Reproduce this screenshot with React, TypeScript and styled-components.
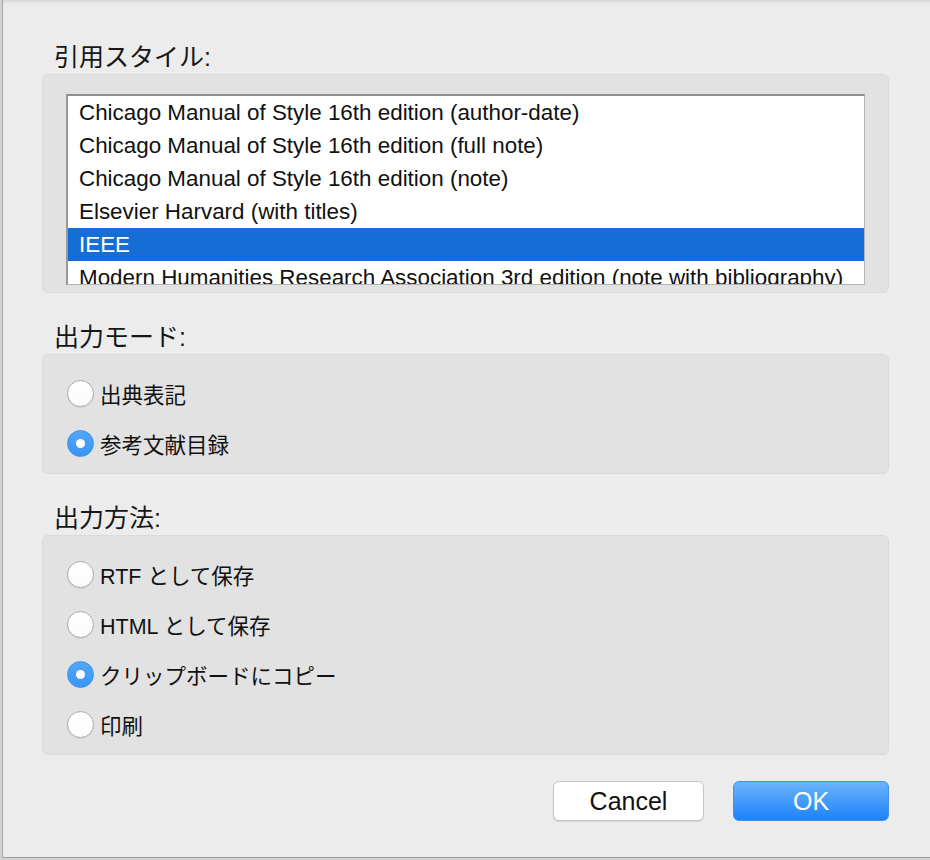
import React, { useState } from "react";
import styled, { createGlobalStyle } from "styled-components";

const GlobalStyle = createGlobalStyle`
  html, body {
    margin: 0;
    padding: 0;
    background: #d2d2d2;
  }
  body {
    font-family: "Liberation Sans", "Noto Sans CJK JP", sans-serif;
    color: #111;
  }
`;

const styles = [
  "Chicago Manual of Style 16th edition (author-date)",
  "Chicago Manual of Style 16th edition (full note)",
  "Chicago Manual of Style 16th edition (note)",
  "Elsevier Harvard (with titles)",
  "IEEE",
  "Modern Humanities Research Association 3rd edition (note with bibliography)",
];

const modes = ["出典表記", "参考文献目録"];
const outputs = ["RTF として保存", "HTML として保存", "クリップボードにコピー", "印刷"];

function App() {
  const [style, setStyle] = useState(4);
  const [mode, setMode] = useState(1);
  const [output, setOutput] = useState(2);

  return (
    <>
      <GlobalStyle />
      <Window>
        <Section>
          <Label>引用スタイル:</Label>
          <Group $list>
            <ListBox>
              {styles.map((name, index) => (
                <ListRow
                  key={name}
                  $selected={index === style}
                  onClick={() => setStyle(index)}
                >
                  {name}
                </ListRow>
              ))}
            </ListBox>
          </Group>
        </Section>

        <Section>
          <Label>出力モード:</Label>
          <Group>
            {modes.map((name, index) => (
              <RadioRow key={name} onClick={() => setMode(index)}>
                <Radio $checked={index === mode} />
                {name}
              </RadioRow>
            ))}
          </Group>
        </Section>

        <Section>
          <Label>出力方法:</Label>
          <Group>
            {outputs.map((name, index) => (
              <RadioRow key={name} onClick={() => setOutput(index)}>
                <Radio $checked={index === output} />
                {name}
              </RadioRow>
            ))}
          </Group>
        </Section>

        <Buttons>
          <Button>Cancel</Button>
          <Button $primary>OK</Button>
        </Buttons>
      </Window>
    </>
  );
}

const Window = styled.div`
  box-sizing: border-box;
  height: 858px;
  margin-left: 2px;
  padding: 40px 41px 0 39px;
  border-left: 1px solid #a9a9a9;
  border-bottom: 1px solid #9c9c9c;
  background: linear-gradient(#d5d5d5 0, #e6e6e6 3px, #ececec 6px, #ececec);
  display: flex;
  flex-direction: column;
  gap: 27px;
`;

const Section = styled.section`
  display: flex;
  flex-direction: column;
`;

const Label = styled.div`
  height: 34px;
  line-height: 34px;
  padding-left: 12px;
  font-size: 25px;
  color: #161616;
`;

const Group = styled.div<{ $list?: boolean }>`
  box-sizing: border-box;
  background: #e2e2e2;
  border: 1px solid #dadada;
  border-radius: 6px;
  padding: ${(p) => (p.$list ? "19px 23px 7px 23px" : "13px 0 5px 24px")};
`;

const ListBox = styled.div`
  box-sizing: border-box;
  height: 191px;
  overflow: hidden;
  background: #fff;
  border-top: 2px solid #8f8f8f;
  border-left: 2px solid #9a9a9a;
  border-right: 1px solid #b4b4b4;
  border-bottom: 1px solid #b4b4b4;
`;

const ListRow = styled.div<{ $selected?: boolean }>`
  height: 33px;
  line-height: 33px;
  padding-left: 11px;
  font-size: 22.4px;
  white-space: nowrap;
  color: ${(p) => (p.$selected ? "#fff" : "#111")};
  background: ${(p) => (p.$selected ? "#156ed6" : "transparent")};
  cursor: default;
`;

const RadioRow = styled.div`
  height: 50px;
  display: flex;
  align-items: center;
  gap: 6px;
  font-size: 21.5px;
  color: #111;
  cursor: default;
`;

const Radio = styled.span<{ $checked?: boolean }>`
  box-sizing: border-box;
  width: 27px;
  height: 27px;
  border-radius: 50%;
  flex-shrink: 0;
  position: relative;
  ${(p) =>
    p.$checked
      ? `
    background: linear-gradient(#52a6fb, #3b95f5);
    border: 1px solid #3a90ee;
    &::after {
      content: "";
      position: absolute;
      left: 50%;
      top: 50%;
      width: 9px;
      height: 9px;
      margin: -4.5px 0 0 -4.5px;
      border-radius: 50%;
      background: #fff;
    }
  `
      : `
    background: linear-gradient(#ffffff, #fbfbfb);
    border: 1px solid #ababab;
    box-shadow: 0 1px 1px rgba(0, 0, 0, 0.08);
  `}
`;

const Buttons = styled.div`
  display: flex;
  justify-content: flex-end;
  gap: 29px;
  margin-top: -1px;
`;

const Button = styled.button<{ $primary?: boolean }>`
  box-sizing: border-box;
  height: 40px;
  width: ${(p) => (p.$primary ? "156px" : "151px")};
  border-radius: 6px;
  font-family: "Liberation Sans", sans-serif;
  font-size: 25px;
  padding: 0;
  cursor: default;
  color: ${(p) => (p.$primary ? "#fff" : "#111")};
  background: ${(p) =>
    p.$primary ? "linear-gradient(#6db4fb, #1c82fa)" : "#fff"};
  border: 1px solid ${(p) => (p.$primary ? "#3f91f4" : "#c6c6c6")};
  box-shadow: ${(p) =>
    p.$primary ? "none" : "0 1px 1px rgba(0, 0, 0, 0.12)"};
`;

export default App;
